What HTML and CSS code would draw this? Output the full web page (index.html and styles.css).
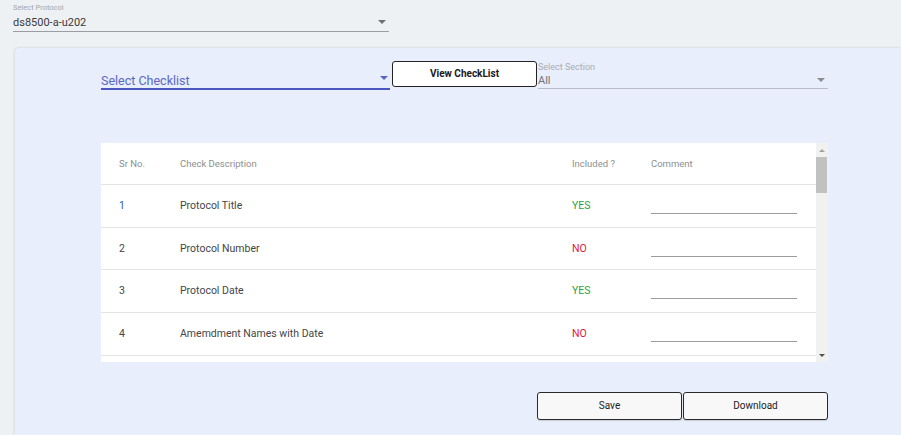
FILE: index.html
```html
<!DOCTYPE html>
<html>
<head>
<meta charset="utf-8">
<link rel="stylesheet" href="styles.css">
</head>
<body>
<div class="top">
  <div class="field protocol">
    <div class="flabel">Select Protocol</div>
    <div class="fvalue"><span>ds8500-a-u202</span><span class="caret"></span></div>
  </div>
</div>
<div class="card">
  <div class="controls">
    <div class="checklist">
      <span>Select Checklist</span><span class="caret indigo"></span>
    </div>
    <button class="view-btn">View CheckList</button>
    <div class="section">
      <div class="flabel">Select Section</div>
      <div class="svalue"><span>All</span><span class="caret light"></span></div>
    </div>
  </div>
  <div class="table-box">
    <div class="table-view">
      <table>
        <colgroup><col class="c1"><col class="c2"><col class="c3"><col class="c4"></colgroup>
        <thead>
          <tr><th>Sr No.</th><th>Check Description</th><th>Included ?</th><th>Comment</th></tr>
        </thead>
        <tbody>
          <tr><td class="num first">1</td><td>Protocol Title</td><td class="yes">YES</td><td><div class="comment"></div></td></tr>
          <tr><td class="num">2</td><td>Protocol Number</td><td class="no">NO</td><td><div class="comment"></div></td></tr>
          <tr><td class="num">3</td><td>Protocol Date</td><td class="yes">YES</td><td><div class="comment"></div></td></tr>
          <tr><td class="num">4</td><td>Amemdment Names with Date</td><td class="no">NO</td><td><div class="comment"></div></td></tr>
        </tbody>
      </table>
    </div>
    <div class="scrollbar">
      <div class="arrow up"></div>
      <div class="track"><div class="thumb"></div></div>
      <div class="arrow down"></div>
    </div>
  </div>
  <div class="actions">
    <button class="act-btn">Save</button>
    <button class="act-btn">Download</button>
  </div>
</div>
</body>
</html>
```

FILE: styles.css
```css
* { box-sizing: border-box; }
html, body { margin: 0; padding: 0; }
body {
  background: #edf1f4;
  font-family: Roboto, "Liberation Sans", sans-serif;
  width: 901px;
  height: 435px;
  overflow: hidden;
}
.top { padding: 3px 0 0 13px; height: 48px; }
.field.protocol { width: 376px; }
.flabel { font-size: 7.5px; color: #a2a6ab; line-height: 10px; }
.fvalue {
  display: flex; justify-content: space-between; align-items: center;
  font-size: 11px; color: #3a3a3a; height: 19px;
  border-bottom: 1px solid #9a9ea3;
  padding-right: 3px;
}
.caret {
  width: 0; height: 0;
  border-left: 4px solid transparent; border-right: 4px solid transparent;
  border-top: 4px solid #707070;
}
.caret.indigo { border-top-color: #5964c2; }
.caret.light { border-top-color: #8a8c90; }

.card {
  background: #e8eefb;
  margin-left: 15px;
  height: 387px;
  border-top-left-radius: 4px;
  box-shadow: -1px 0 3px rgba(0,0,0,0.08), 0 -1px 2px rgba(0,0,0,0.04);
  padding: 13px 73px 0 86px;
}
.controls { display: flex; align-items: flex-start; height: 29px; }
.checklist {
  width: 289px; height: 29px;
  display: flex; justify-content: space-between; align-items: flex-end;
  border-bottom: 2px solid #4b56c0;
  color: #5c67c4; font-size: 12.5px;
  padding: 0 2px 0 0;
}
.checklist .caret { margin-bottom: 8px; }
.view-btn {
  width: 145px; height: 26px; margin: 0 1px 0 2px;
  background: #fff; border: 1px solid #222; border-radius: 3px;
  font-family: Roboto, "Liberation Sans", sans-serif;
  font-weight: 700; font-size: 10px; color: #1a1a1a;
  padding: 0 0 2px;
}
.section { width: 290px; height: 28px; }
.section .flabel { font-size: 9px; color: #a9acb6; line-height: 10px; margin-top: 1px; }
.svalue {
  display: flex; justify-content: space-between; align-items: center;
  font-size: 11px; color: #727478; height: 17px;
  border-bottom: 1px solid #b9bcc6;
  padding-right: 3px;
}

.table-box {
  display: flex; margin-top: 53px; height: 219px; width: 727px;
}
.table-view { width: 715px; background: #fff; overflow: hidden; }
table { border-collapse: collapse; table-layout: fixed; width: 715px; }
col.c1 { width: 79px; } col.c2 { width: 392px; } col.c3 { width: 79px; } col.c4 { width: 165px; }
th {
  text-align: left; font-weight: 400; font-size: 9.5px; color: #8e8e8e;
  height: 41px; border-bottom: 1px solid #e4e4e4; padding: 0;
}
th:first-child, td:first-child { padding-left: 18px; }
td {
  font-size: 10.5px; color: #454545; height: 43px; padding: 0;
  border-bottom: 1px solid #e4e4e4;
}
tbody tr:nth-child(2) td { height: 42px; }
td.num.first { color: #2f5fa6; }
td.yes { color: #2ea043; }
td.no { color: #e5143a; }
.comment { width: 146px; border-bottom: 1px solid #9c9c9c; height: 1px; margin-top: 16px; }
.scrollbar { width: 12px; background: #f1f1f1; display: flex; flex-direction: column; align-items: center; }
.arrow { height: 14px; width: 12px; display: flex; align-items: center; justify-content: center; }
.arrow.up::after {
  content: ""; border-left: 3px solid transparent; border-right: 3px solid transparent;
  border-bottom: 3px solid #a3a3a3;
}
.arrow.down::after {
  content: ""; border-left: 3px solid transparent; border-right: 3px solid transparent;
  border-top: 3px solid #505050;
}
.track { flex: 1; width: 12px; }
.thumb { width: 11px; height: 36px; background: #c1c1c1; }
.actions { display: flex; justify-content: flex-end; margin-top: 30px; width: 727px; }
.act-btn {
  width: 145px; height: 28px; margin-left: 1px;
  background: #f8f8f8; border: 1px solid #2a2a2a; border-radius: 3px;
  font-family: Roboto, "Liberation Sans", sans-serif; font-size: 10px; color: #222;
  box-shadow: 0 1px 1px rgba(0,0,0,0.15);
  padding: 0 0 2px;
}
```
